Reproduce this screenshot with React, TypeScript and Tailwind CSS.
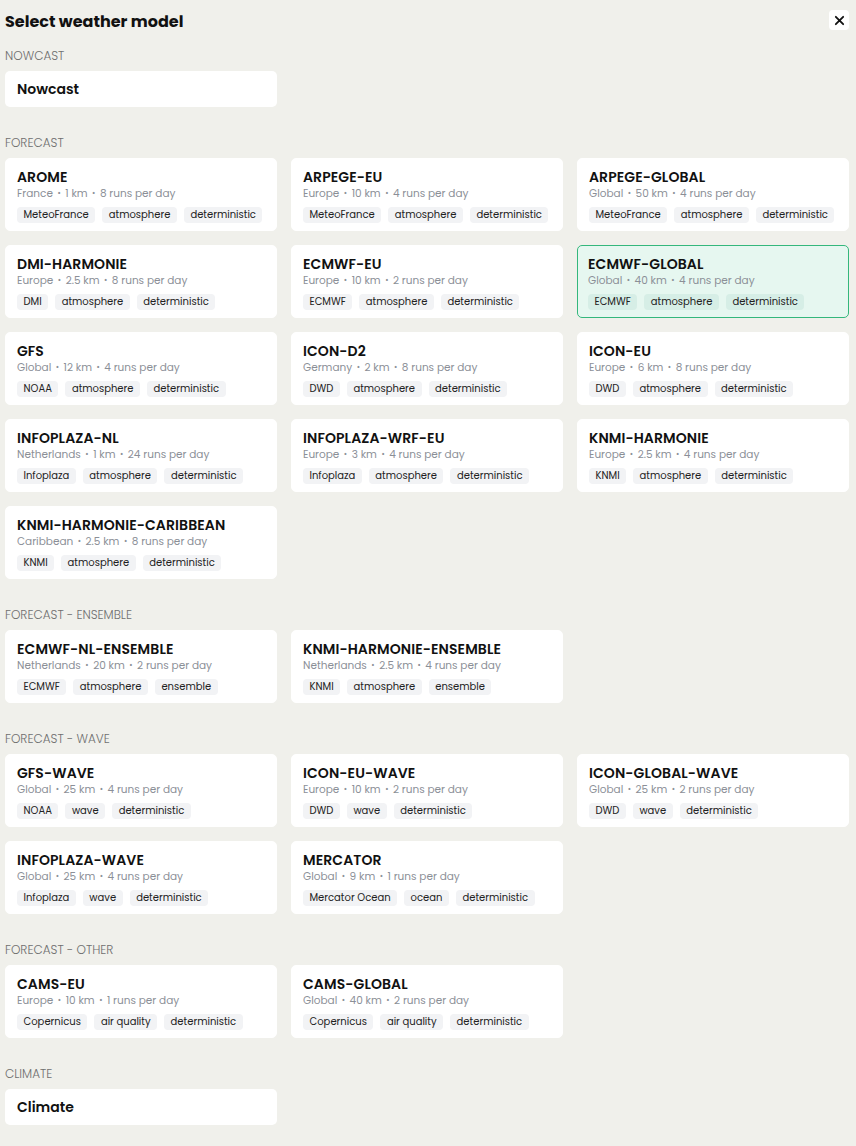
import React from "react";

type Model = { name: string; region: string; res: string; runs: string; tags: string[]; selected?: boolean };

const forecast: Model[] = [
  { name: "AROME", region: "France", res: "1 km", runs: "8 runs per day", tags: ["MeteoFrance", "atmosphere", "deterministic"] },
  { name: "ARPEGE-EU", region: "Europe", res: "10 km", runs: "4 runs per day", tags: ["MeteoFrance", "atmosphere", "deterministic"] },
  { name: "ARPEGE-GLOBAL", region: "Global", res: "50 km", runs: "4 runs per day", tags: ["MeteoFrance", "atmosphere", "deterministic"] },
  { name: "DMI-HARMONIE", region: "Europe", res: "2.5 km", runs: "8 runs per day", tags: ["DMI", "atmosphere", "deterministic"] },
  { name: "ECMWF-EU", region: "Europe", res: "10 km", runs: "2 runs per day", tags: ["ECMWF", "atmosphere", "deterministic"] },
  { name: "ECMWF-GLOBAL", region: "Global", res: "40 km", runs: "4 runs per day", tags: ["ECMWF", "atmosphere", "deterministic"], selected: true },
  { name: "GFS", region: "Global", res: "12 km", runs: "4 runs per day", tags: ["NOAA", "atmosphere", "deterministic"] },
  { name: "ICON-D2", region: "Germany", res: "2 km", runs: "8 runs per day", tags: ["DWD", "atmosphere", "deterministic"] },
  { name: "ICON-EU", region: "Europe", res: "6 km", runs: "8 runs per day", tags: ["DWD", "atmosphere", "deterministic"] },
  { name: "INFOPLAZA-NL", region: "Netherlands", res: "1 km", runs: "24 runs per day", tags: ["Infoplaza", "atmosphere", "deterministic"] },
  { name: "INFOPLAZA-WRF-EU", region: "Europe", res: "3 km", runs: "4 runs per day", tags: ["Infoplaza", "atmosphere", "deterministic"] },
  { name: "KNMI-HARMONIE", region: "Europe", res: "2.5 km", runs: "4 runs per day", tags: ["KNMI", "atmosphere", "deterministic"] },
  { name: "KNMI-HARMONIE-CARIBBEAN", region: "Caribbean", res: "2.5 km", runs: "8 runs per day", tags: ["KNMI", "atmosphere", "deterministic"] },
];

const ensemble: Model[] = [
  { name: "ECMWF-NL-ENSEMBLE", region: "Netherlands", res: "20 km", runs: "2 runs per day", tags: ["ECMWF", "atmosphere", "ensemble"] },
  { name: "KNMI-HARMONIE-ENSEMBLE", region: "Netherlands", res: "2.5 km", runs: "4 runs per day", tags: ["KNMI", "atmosphere", "ensemble"] },
];

const wave: Model[] = [
  { name: "GFS-WAVE", region: "Global", res: "25 km", runs: "4 runs per day", tags: ["NOAA", "wave", "deterministic"] },
  { name: "ICON-EU-WAVE", region: "Europe", res: "10 km", runs: "2 runs per day", tags: ["DWD", "wave", "deterministic"] },
  { name: "ICON-GLOBAL-WAVE", region: "Global", res: "25 km", runs: "2 runs per day", tags: ["DWD", "wave", "deterministic"] },
  { name: "INFOPLAZA-WAVE", region: "Global", res: "25 km", runs: "4 runs per day", tags: ["Infoplaza", "wave", "deterministic"] },
  { name: "MERCATOR", region: "Global", res: "9 km", runs: "1 runs per day", tags: ["Mercator Ocean", "ocean", "deterministic"] },
];

const other: Model[] = [
  { name: "CAMS-EU", region: "Europe", res: "10 km", runs: "1 runs per day", tags: ["Copernicus", "air quality", "deterministic"] },
  { name: "CAMS-GLOBAL", region: "Global", res: "40 km", runs: "2 runs per day", tags: ["Copernicus", "air quality", "deterministic"] },
];

function Card({ m }: { m: Model }) {
  return (
    <div
      className={
        m.selected
          ? "rounded-[5px] border border-[#34b77c] bg-[#e6f7f0] px-[10px] pt-[8px] pb-[7px]"
          : "rounded-[5px] border border-white bg-white px-[11px] pt-[8px] pb-[7px]"
      }
    >
      <div className="text-[14px] leading-[20px] font-semibold text-[#111] tracking-[0.1px]">{m.name}</div>
      <div className="flex items-center text-[10.5px] leading-[14px] text-[#8b8f97]">
        <span>{m.region}</span>
        <span className="mx-[4.5px] text-[8px]">•</span>
        <span>{m.res}</span>
        <span className="mx-[4.5px] text-[8px]">•</span>
        <span>{m.runs}</span>
      </div>
      <div className="mt-[6px] flex gap-[7px]">
        {m.tags.map((t) => (
          <span
            key={t}
            className={
              (m.selected ? "bg-[#d6eee6] " : "bg-[#f2f3f5] ") +
              "h-[16px] rounded-[4px] px-[6.5px] text-[10px] leading-[16px] text-[#222]"
            }
          >
            {t}
          </span>
        ))}
      </div>
    </div>
  );
}

function Section({ label, models }: { label: string; models: Model[] }) {
  return (
    <div className="mt-[28px]">
      <div className="mb-[7px] text-[12px] leading-[16px] font-light text-[#6f6f6f] uppercase">{label}</div>
      <div className="grid grid-cols-3 gap-[14px]">
        {models.map((m) => (
          <Card key={m.name} m={m} />
        ))}
      </div>
    </div>
  );
}

function Simple({ label, title, first }: { label: string; title: string; first?: boolean }) {
  return (
    <div className={first ? "mt-[16px]" : "mt-[28px]"}>
      <div className="mb-[7px] text-[12px] leading-[16px] font-light text-[#6f6f6f] uppercase">{label}</div>
      <div className="grid grid-cols-3 gap-[14px]">
        <div className="h-[36px] rounded-[5px] bg-white px-[12px] flex items-center text-[14px] font-semibold text-[#111]">{title}</div>
      </div>
    </div>
  );
}

export default function App() {
  return (
    <div
      className="min-h-[1146px] w-[856px] bg-[#f0f0eb] pl-[5px] pr-[7px] pt-[12px] pb-[20px]"
      style={{ fontFamily: "Poppins, 'Open Sans', 'Noto Sans', sans-serif" }}
    >
      <div className="flex h-[20px] items-center justify-between">
        <div className="text-[16px] font-bold text-[#111] leading-[20px]">Select weather model</div>
        <button className="-mt-[4px] flex h-[20px] w-[20px] items-center justify-center rounded-[4px] bg-white">
          <svg width="11" height="11" viewBox="0 0 12 12" fill="none" stroke="#111" strokeWidth="2" strokeLinecap="round">
            <path d="M2 2L10 10M10 2L2 10" />
          </svg>
        </button>
      </div>
      <Simple label="Nowcast" title="Nowcast" first />
      <Section label="Forecast" models={forecast} />
      <Section label="Forecast - Ensemble" models={ensemble} />
      <Section label="Forecast - Wave" models={wave} />
      <Section label="Forecast - Other" models={other} />
      <Simple label="Climate" title="Climate" />
    </div>
  );
}
